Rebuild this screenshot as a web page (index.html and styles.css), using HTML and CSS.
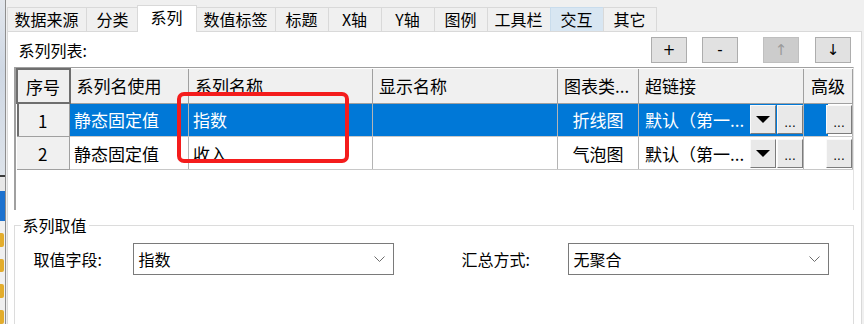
FILE: index.html
```html
<!DOCTYPE html>
<html lang="zh-CN">
<head>
  <meta charset="UTF-8" />
  <title>系列设置</title>
  <link rel="stylesheet" href="styles.css">
</head>
<body>
  <div class="screen">
    <!-- sliver of the window behind -->
    <div class="edge">
      <div class="edge-top"></div>
      <div class="edge-char"></div>
      <div class="edge-blue"></div>
      <div class="edge-icon"></div>
      <div class="edge-icon"></div>
      <div class="edge-icon"></div>
      <div class="edge-icon"></div>
    </div>

    <div class="dialog">
      <div class="tabs">
        <div class="tab">数据来源</div>
        <div class="tab">分类</div>
        <div class="tab active">系列</div>
        <div class="tab">数值标签</div>
        <div class="tab">标题</div>
        <div class="tab">X轴</div>
        <div class="tab">Y轴</div>
        <div class="tab">图例</div>
        <div class="tab">工具栏</div>
        <div class="tab hover">交互</div>
        <div class="tab">其它</div>
      </div>

      <div class="panel">
        <div class="list-bar">
          <span class="caption">系列列表:</span>
          <div class="tools">
            <button class="tool">+</button>
            <button class="tool minus">-</button>
            <button class="tool up" disabled>↑</button>
            <button class="tool down">↓</button>
          </div>
        </div>

        <div class="grid-wrap">
          <table class="grid">
            <colgroup>
              <col class="c-no"><col class="c-use"><col class="c-name"><col class="c-show">
              <col class="c-type"><col class="c-link"><col class="c-adv">
            </colgroup>
            <thead>
              <tr>
                <th class="corner">序号</th>
                <th>系列名使用</th>
                <th>系列名称</th>
                <th>显示名称</th>
                <th>图表类...</th>
                <th>超链接</th>
                <th class="center">高级</th>
              </tr>
            </thead>
            <tbody>
              <tr class="selected">
                <td class="row-no current">1</td>
                <td>静态固定值</td>
                <td>指数</td>
                <td></td>
                <td class="center">折线图</td>
                <td class="link">
                  <div class="link-cell">
                    <span class="link-text">默认（第一...</span>
                    <span class="mini drop"><span class="tri"></span></span>
                    <span class="mini">...</span>
                  </div>
                </td>
                <td class="adv"><div class="adv-cell"><span class="mini">...</span></div></td>
              </tr>
              <tr>
                <td class="row-no">2</td>
                <td>静态固定值</td>
                <td>收入</td>
                <td></td>
                <td class="center">气泡图</td>
                <td class="link">
                  <div class="link-cell">
                    <span class="link-text">默认（第一...</span>
                    <span class="mini drop"><span class="tri"></span></span>
                    <span class="mini">...</span>
                  </div>
                </td>
                <td class="adv"><div class="adv-cell"><span class="mini">...</span></div></td>
              </tr>
            </tbody>
          </table>
          <div class="mark"></div>
        </div>

        <fieldset class="group">
          <legend>系列取值</legend>
          <div class="field-row">
            <label class="label">取值字段:</label>
            <div class="select">
              <span>指数</span>
              <svg width="11" height="6" viewBox="0 0 11 6"><polyline points="0.5,0.5 5.5,5.5 10.5,0.5" fill="none" stroke="#6d6d6d" stroke-width="1"/></svg>
            </div>
            <label class="label second">汇总方式:</label>
            <div class="select">
              <span>无聚合</span>
              <svg width="11" height="6" viewBox="0 0 11 6"><polyline points="0.5,0.5 5.5,5.5 10.5,0.5" fill="none" stroke="#6d6d6d" stroke-width="1"/></svg>
            </div>
          </div>
        </fieldset>
      </div>
    </div>
  </div>
</body>
</html>
```

FILE: styles.css
```css
body {
  margin: 0;
  background: #f0f0f0;
  font-family: "Noto Sans CJK SC", "Microsoft YaHei", sans-serif;
  font-size: 16px;
  color: #000;
  overflow: hidden;
}

.screen {
  display: flex;
  width: 864px;
  height: 324px;
}

.edge {
  width: 6px;
  border-right: 1px solid #8e8e8e;
  display: flex;
  flex-direction: column;
  background: #f0f0f0;
}

.edge-top {
  height: 178px;
  background: linear-gradient(#e2e6ec, #cfd8e4 40%, #dde3ea);
}

.edge-char {
  height: 14px;
  background: #e8e8e8;
  border-top: 2px solid #3c3c3c;
}

.edge-blue {
  height: 30px;
  background: #1d72cf;
}

.edge-icon {
  height: 14px;
  margin-top: 12px;
  width: 4px;
  background: #e3ad2d;
  border-radius: 0 2px 2px 0;
}

.dialog {
  flex: 1;
  display: flex;
  flex-direction: column;
  padding: 7px 2px 0 1px;
}

/* tab strip */
.tabs {
  display: flex;
  align-items: flex-end;
  height: 24px;
}

.tab {
  box-sizing: border-box;
  height: 24px;
  min-width: 54px;
  padding: 0 7px;
  margin-right: -1px;
  border: 1px solid #d9d9d9;
  border-bottom: none;
  background: #f0f0f0;
  text-align: center;
  line-height: 23px;
  white-space: nowrap;
}

.tab.hover {
  background: #d8e6f2;
  border-color: #c9dcec;
}

.tab.active {
  position: relative;
  z-index: 1;
  height: 27px;
  margin: 0 -1px -1px -2px;
  padding: 0 10px;
  min-width: 60px;
  background: #fff;
  border-color: #d9d9d9;
  line-height: 22px;
}

.panel {
  flex: 1;
  background: #fff;
  border: 1px solid #d9d9d9;
  border-bottom: none;
}

/* list header with add / remove / move buttons */
.list-bar {
  height: 35px;
  display: flex;
  align-items: center;
  justify-content: space-between;
  padding: 0 10px 0 11px;
}

.tools {
  display: flex;
  align-items: center;
}

.tool {
  width: 36px;
  height: 26px;
  margin-left: 15px;
  padding: 0;
  background: #e1e1e1;
  border: 1px solid #adadad;
  font-family: "DejaVu Sans", sans-serif;
  font-size: 15px;
  line-height: 22px;
  color: #000;
}

.tool.up {
  margin-left: 25px;
  background: #cccccc;
  border-color: #bfbfbf;
  color: #9a9a9a;
}

.tool.down {
  margin-left: 16px;
}

/* series grid */
.grid-wrap {
  position: relative;
  height: 142px;
  margin: 0 7px 0 6px;
  background: #fff;
  border-top: 1px solid #a0a0a0;
  border-left: 2px solid #a0a0a0;
  border-right: 1px solid #e3e3e3;
}

.grid {
  border-collapse: collapse;
  table-layout: fixed;
  width: 836px;
  font-size: 17px;
}

.c-no { width: 53px; }
.c-use { width: 119px; }
.c-name { width: 184px; }
.c-show { width: 185px; }
.c-type { width: 81px; }
.c-link { width: 165px; }
.c-adv { width: 49px; }

.grid th,
.grid td {
  height: 32px;
  padding: 0 4px;
  white-space: nowrap;
  overflow: hidden;
  text-align: left;
  font-weight: normal;
  border-right: 1px solid #b4b4b4;
  border-bottom: 1px solid #c8c8c8;
}

.grid th {
  background: #f0f0f0;
  padding: 0 6px;
  border-right-color: #a0a0a0;
  border-bottom-color: #a0a0a0;
}

.grid th.corner {
  text-align: center;
  border: 2px solid #6e6e6e;
}

.grid .center {
  text-align: center;
}

.grid td.row-no {
  background: #f0f0f0;
  text-align: center;
  border-right-color: #a0a0a0;
  border-bottom-color: #a0a0a0;
}

.grid td.row-no.current {
  box-shadow: inset 2px 0 #6e6e6e;
}

.selected td {
  background: #0078d7;
  color: #fff;
}

.selected td.row-no {
  background: #f0f0f0;
  color: #000;
}

.grid td.link,
.grid td.adv {
  padding: 0;
}

.link-cell {
  display: flex;
  align-items: center;
  height: 32px;
}

.link-text {
  flex: 1;
  padding-left: 6px;
  overflow: hidden;
}

.selected .link-cell .mini,
.selected .adv-cell {
  color: #000;
}

.mini {
  box-sizing: border-box;
  width: 26px;
  height: 29px;
  display: flex;
  align-items: center;
  justify-content: center;
  background: #e9e9e9;
  border: 1px solid;
  border-color: #fafafa #7c7c7c #7c7c7c #fafafa;
  font-family: "DejaVu Sans", sans-serif;
  font-size: 12px;
  line-height: 1;
  padding-top: 6px;
  color: #000;
}

.link-cell .mini + .mini {
  margin-left: 1px;
}

.drop {
  padding-top: 0;
}

.tri {
  width: 0;
  height: 0;
  border-left: 7px solid transparent;
  border-right: 7px solid transparent;
  border-top: 7px solid #000;
}

.adv-cell {
  display: flex;
  justify-content: flex-end;
  align-items: center;
  height: 32px;
  background: #fff;
}

.selected .adv-cell {
  background: linear-gradient(to right, #0078d7 24px, #fff 24px);
}

/* red annotation frame */
.mark {
  position: absolute;
  left: 161px;
  top: 24px;
  width: 172px;
  height: 71px;
  box-sizing: border-box;
  border: 4px solid #f41c1c;
  border-radius: 7px;
}

/* value group */
.group {
  margin: 4px 7px 0 6px;
  padding: 0;
  border: 1px solid #dcdcdc;
  border-bottom: none;
  min-height: 110px;
}

.group legend {
  margin-left: 6px;
  padding: 0 2px;
  line-height: 22px;
}

.field-row {
  display: flex;
  align-items: center;
  margin-top: 7px;
  padding-left: 19px;
}

.label {
  width: 99px;
}

.label.second {
  width: 106px;
  margin-left: 68px;
}

.select {
  box-sizing: border-box;
  width: 261px;
  height: 32px;
  display: flex;
  align-items: center;
  justify-content: space-between;
  padding: 0 8px 0 5px;
  border: 1px solid #7a7a7a;
  background: #fff;
}
```
